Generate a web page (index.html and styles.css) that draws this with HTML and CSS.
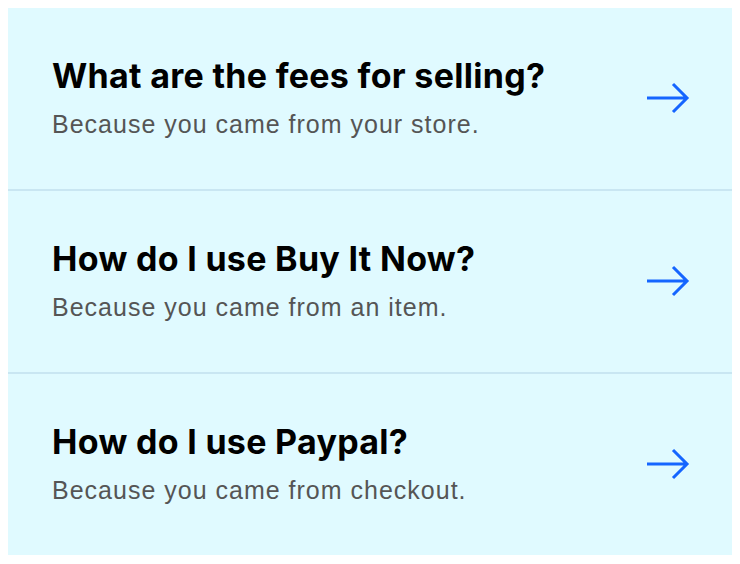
FILE: index.html
```html
<html>
<head>
  <title>Help</title>
  <link rel="stylesheet" href="styles.css">
</head>
<body>
  <ul class="suggestions">
    <li class="suggestion">
      <div class="text">
        <p class="title">What are the fees for selling?</p>
        <p class="reason">Because you came from your store.</p>
      </div>
      <svg class="arrow" width="44" height="32" viewBox="0 0 44 32"><path d="M1 16H41M27 2L41 16L27 30" fill="none" stroke="#1565ff" stroke-width="3"/></svg>
    </li>
    <li class="suggestion">
      <div class="text">
        <p class="title">How do I use Buy It Now?</p>
        <p class="reason">Because you came from an item.</p>
      </div>
      <svg class="arrow" width="44" height="32" viewBox="0 0 44 32"><path d="M1 16H41M27 2L41 16L27 30" fill="none" stroke="#1565ff" stroke-width="3"/></svg>
    </li>
    <li class="suggestion">
      <div class="text">
        <p class="title">How do I use Paypal?</p>
        <p class="reason">Because you came from checkout.</p>
      </div>
      <svg class="arrow" width="44" height="32" viewBox="0 0 44 32"><path d="M1 16H41M27 2L41 16L27 30" fill="none" stroke="#1565ff" stroke-width="3"/></svg>
    </li>
  </ul>
</body>
</html>
```

FILE: styles.css
```css
body {
  margin: 8px;
  background: #fff;
}
.suggestions {
  list-style: none;
  margin: 0;
  padding: 0;
  width: 724px;
  background: #e0faff;
}
.suggestion {
  display: flex;
  align-items: center;
  justify-content: space-between;
  height: 183px;
  padding: 0 42px 1px 44px;
  box-sizing: border-box;
  border-bottom: 2px solid #c9e6f2;
}
.suggestion:last-child {
  height: 181px;
  border-bottom: none;
}
.title {
  margin: 0 0 14px;
  font-family: Inter, sans-serif;
  font-weight: 700;
  font-size: 34px;
  line-height: 38px;
  color: #000;
  letter-spacing: 0.3px;
}
.reason {
  margin: 0;
  font-family: "Liberation Sans", Arial, sans-serif;
  font-size: 25px;
  line-height: 30px;
  color: #555;
  letter-spacing: 1px;
}
.arrow {
  display: block;
}
```
